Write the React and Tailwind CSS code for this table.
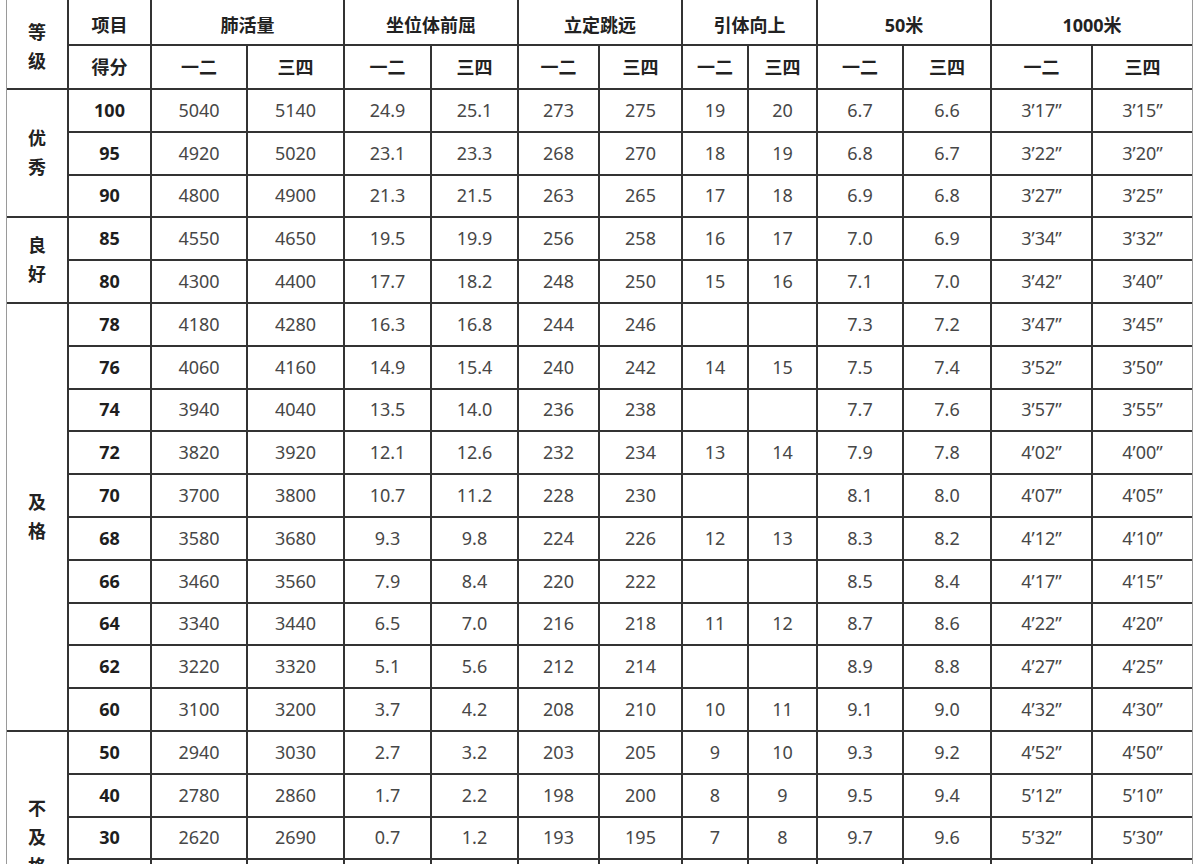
import React from 'react';

const widths = [61, 83, 96, 97, 87, 87, 81, 83, 66, 69, 86, 88, 101, 100];

const rows = [
  ['100', '5040', '5140', '24.9', '25.1', '273', '275', '19', '20', '6.7', '6.6', '3’17”', '3’15”'],
  ['95', '4920', '5020', '23.1', '23.3', '268', '270', '18', '19', '6.8', '6.7', '3’22”', '3’20”'],
  ['90', '4800', '4900', '21.3', '21.5', '263', '265', '17', '18', '6.9', '6.8', '3’27”', '3’25”'],
  ['85', '4550', '4650', '19.5', '19.9', '256', '258', '16', '17', '7.0', '6.9', '3’34”', '3’32”'],
  ['80', '4300', '4400', '17.7', '18.2', '248', '250', '15', '16', '7.1', '7.0', '3’42”', '3’40”'],
  ['78', '4180', '4280', '16.3', '16.8', '244', '246', '', '', '7.3', '7.2', '3’47”', '3’45”'],
  ['76', '4060', '4160', '14.9', '15.4', '240', '242', '14', '15', '7.5', '7.4', '3’52”', '3’50”'],
  ['74', '3940', '4040', '13.5', '14.0', '236', '238', '', '', '7.7', '7.6', '3’57”', '3’55”'],
  ['72', '3820', '3920', '12.1', '12.6', '232', '234', '13', '14', '7.9', '7.8', '4’02”', '4’00”'],
  ['70', '3700', '3800', '10.7', '11.2', '228', '230', '', '', '8.1', '8.0', '4’07”', '4’05”'],
  ['68', '3580', '3680', '9.3', '9.8', '224', '226', '12', '13', '8.3', '8.2', '4’12”', '4’10”'],
  ['66', '3460', '3560', '7.9', '8.4', '220', '222', '', '', '8.5', '8.4', '4’17”', '4’15”'],
  ['64', '3340', '3440', '6.5', '7.0', '216', '218', '11', '12', '8.7', '8.6', '4’22”', '4’20”'],
  ['62', '3220', '3320', '5.1', '5.6', '212', '214', '', '', '8.9', '8.8', '4’27”', '4’25”'],
  ['60', '3100', '3200', '3.7', '4.2', '208', '210', '10', '11', '9.1', '9.0', '4’32”', '4’30”'],
  ['50', '2940', '3030', '2.7', '3.2', '203', '205', '9', '10', '9.3', '9.2', '4’52”', '4’50”'],
  ['40', '2780', '2860', '1.7', '2.2', '198', '200', '8', '9', '9.5', '9.4', '5’12”', '5’10”'],
  ['30', '2620', '2690', '0.7', '1.2', '193', '195', '7', '8', '9.7', '9.6', '5’32”', '5’30”'],
  // rows below the fold: left blank, only the grid shows in the crop
  ['', '', '', '', '', '', '', '', '', '', '', '', ''],
  ['', '', '', '', '', '', '', '', '', '', '', '', ''],
];

// grade label starts at row index -> [label chars, rowSpan]
const groups = {
  0: ['优秀', 3],
  3: ['良好', 2],
  5: ['及格', 10],
  15: ['不及格', 5],
};

const items = ['肺活量', '坐位体前屈', '立定跳远', '引体向上', '50米', '1000米'];

function Stack({ text }) {
  return (
    <div className="flex flex-col items-center leading-[29px]">
      {text.split('').map((c, i) => (
        <span key={i}>{c}</span>
      ))}
    </div>
  );
}

export default function App() {
  const line = 'border-[#333]';

  return (
    <div className="min-h-screen bg-white font-['Noto_Sans','Noto_Sans_CJK_SC',sans-serif] text-[18px]">
      <div className="ml-[6px] w-[1187px] border-x border-[#9a9a9a]">
        <table className="w-full border-collapse table-fixed text-center">
          <colgroup>
            {widths.map((w, i) => (
              <col key={i} style={{ width: w }} />
            ))}
          </colgroup>
          <thead>
            <tr className="h-[45px]">
              <th rowSpan={2} className={`border-b-2 border-r-2 ${line} pt-[6px] font-bold text-[#222]`}>
                <Stack text="等级" />
              </th>
              <th className={`border-b-2 border-x-2 ${line} pt-[6px] font-bold text-[#222]`}>项目</th>
              {items.map((t, i) => (
                <th
                  key={t}
                  colSpan={2}
                  className={`${i === items.length - 1 ? 'border-b-2 border-l-2' : 'border-b-2 border-x-2'} ${line} pt-[6px] font-bold text-[#222]`}
                >
                  {t}
                </th>
              ))}
            </tr>
            <tr className="h-[44px]">
              <th className={`border-2 ${line} font-bold text-[#222]`}>得分</th>
              {items.flatMap((t, i) => [
                <th key={t + '1'} className={`border-2 ${line} font-bold text-[#222]`}>一二</th>,
                <th
                  key={t + '2'}
                  className={`${i === items.length - 1 ? 'border-y-2 border-l-2' : 'border-2'} ${line} font-bold text-[#222]`}
                >
                  三四
                </th>,
              ])}
            </tr>
          </thead>
          <tbody>
            {rows.map((r, ri) => (
              <tr key={ri} className="h-[42.8px]">
                {groups[ri] && (
                  <td rowSpan={groups[ri][1]} className={`border-y-2 border-r-2 ${line} font-bold text-[#222]`}>
                    <Stack text={groups[ri][0]} />
                  </td>
                )}
                {r.map((v, ci) => (
                  <td
                    key={ci}
                    className={`${ci === r.length - 1 ? 'border-y-2 border-l-2' : 'border-2'} ${line} ${
                      ci === 0 ? 'font-bold text-[#1e1e1e]' : 'text-[#474747]'
                    }`}
                  >
                    {v}
                  </td>
                ))}
              </tr>
            ))}
          </tbody>
        </table>
      </div>
    </div>
  );
}
